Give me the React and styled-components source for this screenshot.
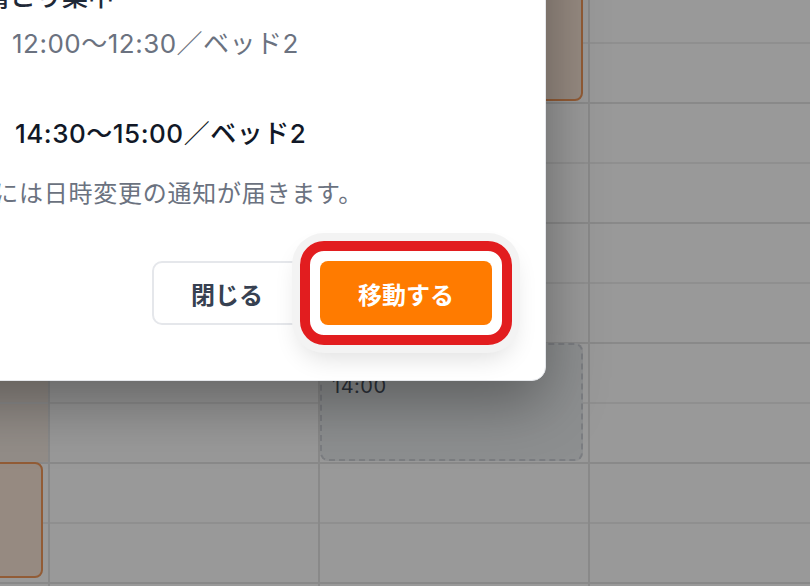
import React from "react";
import styled, { createGlobalStyle } from "styled-components";

const GlobalStyle = createGlobalStyle`
  html, body {
    margin: 0;
    padding: 0;
  }
  body {
    font-family: "Inter", "Noto Sans CJK JP", sans-serif;
    background: #ffffff;
  }
  *, *::before, *::after {
    box-sizing: border-box;
  }
`;

const Screen = styled.div`
  position: relative;
  width: 810px;
  height: 586px;
  overflow: hidden;
  background: #ffffff;
`;

/* Day view, scrolled so that the 11:00 row sits just above the fold */
const Calendar = styled.div`
  display: flex;
  margin: -18px 0 0 -222px;
`;

const BedColumn = styled.div`
  position: relative;
  flex: 0 0 270px;
  display: flex;
  flex-direction: column;
  border-left: 2px solid #e4e4e4;
`;

const Slot = styled.div`
  flex: 0 0 60px;
  border-top: 2px solid ${(p) => (p.$hour ? "#e4e4e4" : "#efefef")};
  background: ${(p) => (p.$tint ? "#f6ebe3" : "transparent")};
`;

const Booking = styled.div`
  position: absolute;
  left: 2px;
  right: 5px;
  background: #fbe6d8;
  border: 2px solid #f39a5a;
  border-radius: 8px;
`;

const DropTarget = styled.div`
  position: absolute;
  top: 361px;
  height: 118px;
  left: 0;
  right: 5px;
  padding: 6px 10px;
  background: #eceef1;
  border: 2px dashed #cdd1d7;
  border-radius: 8px;
  color: #4b5563;
`;

const DropLabel = styled.div`
  font-size: 18px;
  line-height: 22px;
  font-weight: 600;
`;

const DropTime = styled.div`
  font-size: 20px;
  line-height: 26px;
  letter-spacing: 0.5px;
`;

const Backdrop = styled.div`
  position: absolute;
  inset: 0;
  background: rgba(0, 0, 0, 0.4);
`;

const Dialog = styled.div`
  position: absolute;
  right: 264px;
  bottom: 205px;
  width: 765px;
  display: flex;
  flex-direction: column;
  padding: 32px 53px 55px 39px;
  background: #ffffff;
  border: 1px solid #e5e7eb;
  border-radius: 14px;
  box-shadow: 0 22px 60px rgba(0, 0, 0, 0.35);
`;

const Title = styled.h2`
  margin: 0 0 24px;
  font-size: 30px;
  line-height: 40px;
  font-weight: 700;
  color: #111827;
`;

const Summary = styled.div`
  font-size: 26px;
  line-height: 40px;
  font-weight: 500;
  color: #1f2937;
  white-space: nowrap;
`;

const DetailRow = styled.div`
  display: grid;
  grid-template-columns: 191px 1fr;
  align-items: center;
  margin-top: ${(p) => p.$gap}px;
`;

const DetailLabel = styled.span`
  font-size: 22px;
  color: #6b7280;
`;

const TimeValue = styled.span`
  font-size: 26px;
  line-height: 40px;
  letter-spacing: 0.5px;
  white-space: nowrap;
  font-weight: ${(p) => (p.$current ? 450 : 400)};
  color: ${(p) => (p.$current ? "#111827" : "#6b7280")};
  padding-left: ${(p) => (p.$current ? 3 : 0)}px;
`;

const Note = styled.p`
  margin: 22px 0 0;
  font-size: 24px;
  line-height: 36px;
  letter-spacing: 0.75px;
  color: #6b7280;
  white-space: nowrap;
`;

const Footer = styled.div`
  display: flex;
  justify-content: flex-end;
  gap: 18px;
  margin-top: 49px;
`;

const BaseButton = styled.button`
  height: 64px;
  border-radius: 10px;
  font-family: inherit;
  font-size: 24px;
  cursor: pointer;
`;

const CloseButton = styled(BaseButton)`
  width: 150px;
  background: #ffffff;
  border: 2px solid #e5e7eb;
  color: #374151;
  font-weight: 600;
`;

/* Red callout ring drawn around the primary action */
const Callout = styled.span`
  position: relative;
  display: inline-flex;

  &::before {
    content: "";
    position: absolute;
    inset: -20px;
    border: 10px solid #e21d1f;
    border-radius: 24px;
    box-shadow: 0 0 0 8px #f3f3f3, 0 12px 26px rgba(0, 0, 0, 0.14);
    pointer-events: none;
  }
`;

const PrimaryButton = styled(BaseButton)`
  width: 172px;
  border: none;
  border-radius: 8px;
  background: #ff7b00;
  color: #ffffff;
  font-weight: 700;
`;

const slots = Array.from({ length: 11 }, (_, i) => i);

const columns = [
  { id: "bed1", tinted: [6, 7], bookings: [{ top: 480, height: 116 }] },
  { id: "bed2", tinted: [], bookings: [] },
  { id: "bed3", tinted: [], bookings: [{ top: 2, height: 117 }], drop: true },
  { id: "bed4", tinted: [], bookings: [] },
];

export default function App() {
  return (
    <>
      <GlobalStyle />
      <Screen>
        <Calendar>
          {columns.map((col) => (
            <BedColumn key={col.id}>
              {slots.map((i) => (
                <Slot key={i} $hour={i % 2 === 0} $tint={col.tinted.includes(i)} />
              ))}
              {col.bookings.map((b, i) => (
                <Booking key={i} style={{ top: b.top, height: b.height }} />
              ))}
              {col.drop && (
                <DropTarget>
                  <DropLabel>移動先</DropLabel>
                  <DropTime>14:00</DropTime>
                </DropTarget>
              )}
            </BedColumn>
          ))}
        </Calendar>
        <Backdrop />
        <Dialog role="dialog">
          <Title>予約を移動しますか？</Title>
          <Summary>山田 花子様　肩こり集中</Summary>
          <DetailRow $gap={7}>
            <DetailLabel>変更前</DetailLabel>
            <TimeValue>12:00〜12:30／ベッド2</TimeValue>
          </DetailRow>
          <DetailRow $gap={50}>
            <DetailLabel>変更後</DetailLabel>
            <TimeValue $current>14:30〜15:00／ベッド2</TimeValue>
          </DetailRow>
          <Note>ご予約のお客様には日時変更の通知が届きます。</Note>
          <Footer>
            <CloseButton>閉じる</CloseButton>
            <Callout>
              <PrimaryButton>移動する</PrimaryButton>
            </Callout>
          </Footer>
        </Dialog>
      </Screen>
    </>
  );
}
